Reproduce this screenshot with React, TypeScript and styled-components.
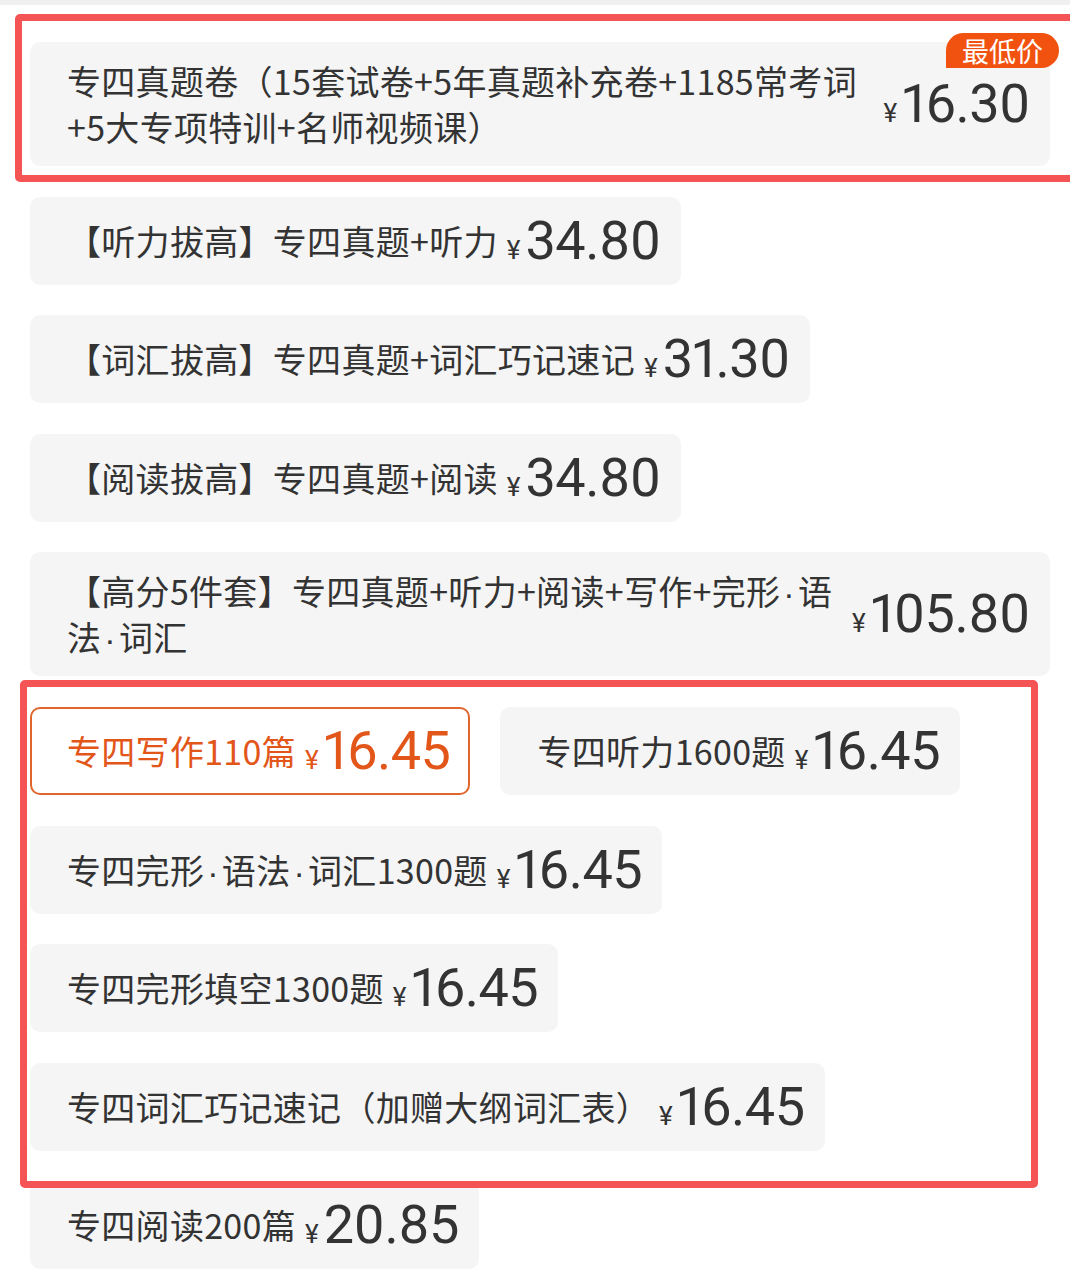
import { Fragment } from 'react';
import styled, { createGlobalStyle } from 'styled-components';

const GlobalStyle = createGlobalStyle`
  html, body {
    margin: 0;
    padding: 0;
    background: #ffffff;
  }
  body {
    font-family: "Noto Sans CJK SC", "Noto Sans", sans-serif;
    color: #333333;
  }
`;

const Page = styled.div`
  position: relative;
  width: 1070px;
  min-height: 1277px;
  overflow: hidden;
  box-sizing: border-box;
`;

const TopEdge = styled.div`
  height: 5px;
  background: #f0f0f0;
`;

const OptionList = styled.div`
  display: flex;
  flex-wrap: wrap;
  gap: 30.6px 30px;
  padding: 37px 20px 0 30px;
`;

const Card = styled.div<{ $wide?: boolean; $active?: boolean }>`
  position: relative;
  display: flex;
  align-items: center;
  box-sizing: border-box;
  min-height: 88px;
  padding: 14px 18px 14px 35px;
  border-radius: 10px;
  border: 2px solid ${(p) => (p.$active ? '#e0662e' : 'transparent')};
  background: ${(p) => (p.$active ? '#ffffff' : '#f5f5f5')};
  color: ${(p) => (p.$active ? '#e2561a' : '#333333')};
  flex: ${(p) => (p.$wide ? '1 1 100%' : '0 0 auto')};
`;

const Title = styled.div<{ $wide?: boolean }>`
  font-size: 34px;
  line-height: 46px;
  letter-spacing: 0.3px;
  white-space: nowrap;
  flex: ${(p) => (p.$wide ? '1 1 auto' : '0 0 auto')};
`;

const Dot = styled.span`
  font-family: "Liberation Sans", sans-serif;
  line-height: 1;
  margin: 0 3px;
`;

const Price = styled.div`
  display: flex;
  align-items: baseline;
  flex-shrink: 0;
  margin-left: 9px;
  white-space: nowrap;
`;

const Yen = styled.span`
  font-family: Roboto, "Noto Sans", sans-serif;
  font-size: 26px;
  margin-right: 5px;
`;

const Amount = styled.span`
  font-family: Roboto, "Noto Sans", sans-serif;
  font-size: 54px;
  line-height: 1;
  letter-spacing: -0.5px;
  font-variant-numeric: proportional-nums;
`;

const Badge = styled.div`
  position: absolute;
  top: -11px;
  right: -11px;
  height: 35px;
  padding: 0 16px;
  display: flex;
  align-items: center;
  background: #f2520f;
  color: #ffffff;
  font-family: "Noto Sans CJK SC", sans-serif;
  font-size: 27px;
  border-radius: 18px 18px 18px 0;
`;

const Mark = styled.div<{ $top: number; $left: number; $w: number; $h: number }>`
  position: absolute;
  top: ${(p) => p.$top}px;
  left: ${(p) => p.$left}px;
  width: ${(p) => p.$w}px;
  height: ${(p) => p.$h}px;
  box-sizing: border-box;
  border: 7px solid #f45454;
  border-radius: 5px;
  pointer-events: none;
`;

interface Option {
  // lines of the title, as they break in the original
  title: string[];
  price: string;
  wide?: boolean;
  active?: boolean;
  badge?: string;
}

const options: Option[] = [
  {
    title: ['专四真题卷（15套试卷+5年真题补充卷+1185常考词', '+5大专项特训+名师视频课）'],
    price: '16.30',
    wide: true,
    badge: '最低价',
  },
  { title: ['【听力拔高】专四真题+听力'], price: '34.80' },
  { title: ['【词汇拔高】专四真题+词汇巧记速记'], price: '31.30' },
  { title: ['【阅读拔高】专四真题+阅读'], price: '34.80' },
  {
    title: ['【高分5件套】专四真题+听力+阅读+写作+完形·语', '法·词汇'],
    price: '105.80',
    wide: true,
  },
  { title: ['专四写作110篇'], price: '16.45', active: true },
  { title: ['专四听力1600题'], price: '16.45' },
  { title: ['专四完形·语法·词汇1300题'], price: '16.45' },
  { title: ['专四完形填空1300题'], price: '16.45' },
  { title: ['专四词汇巧记速记（加赠大纲词汇表）'], price: '16.45' },
  { title: ['专四阅读200篇'], price: '20.85' },
];

// middle dots are narrow in the original, the CJK font draws them full width
const renderLine = (line: string) =>
  line.split('·').map((part, i) => (
    <Fragment key={i}>
      {i > 0 && <Dot>·</Dot>}
      {part}
    </Fragment>
  ));

const renderTitle = (lines: string[]) =>
  lines.map((line, i) => (
    <Fragment key={i}>
      {i > 0 && <br />}
      {renderLine(line)}
    </Fragment>
  ));

export default function App() {
  return (
    <Page>
      <GlobalStyle />
      <TopEdge />
      <OptionList>
        {options.map((o) => (
          <Card key={o.title.join('')} $wide={o.wide} $active={o.active}>
            <Title $wide={o.wide}>{renderTitle(o.title)}</Title>
            <Price>
              <Yen>¥</Yen>
              <Amount>{o.price}</Amount>
            </Price>
            {o.badge && <Badge>{o.badge}</Badge>}
          </Card>
        ))}
      </OptionList>
      <Mark $top={14} $left={15} $w={1062} $h={168} />
      <Mark $top={680} $left={20} $w={1018} $h={508} />
    </Page>
  );
}
